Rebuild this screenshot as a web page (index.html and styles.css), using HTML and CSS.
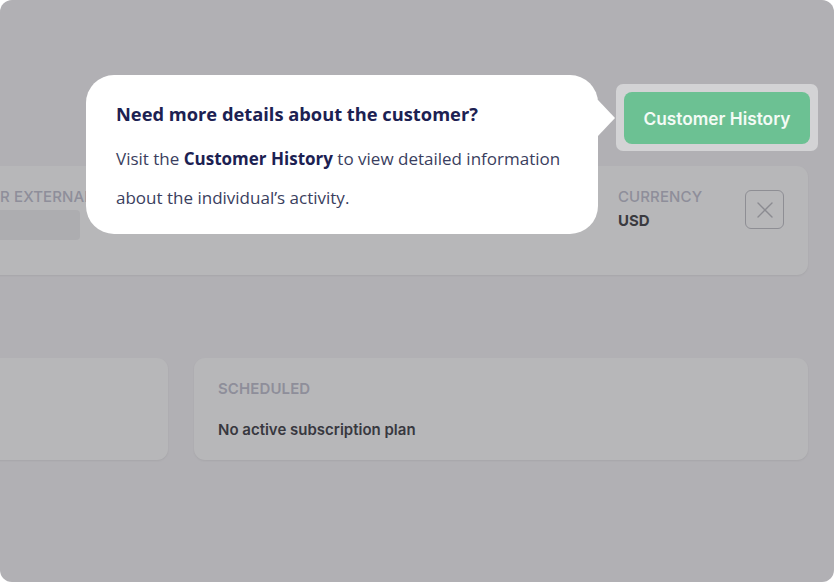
FILE: index.html
```html
<!DOCTYPE html>
<html>
<head>
<meta charset="utf-8">
<link rel="stylesheet" href="styles.css">
</head>
<body>
<div class="frame">
  <div class="content">
    <div class="header">
      <div class="spotlight">
        <button class="history-btn">Customer History</button>
      </div>
    </div>
    <div class="card info-card">
      <div class="field">
        <div class="label">Customer External ID</div>
        <div class="field-box"></div>
      </div>
      <div class="field currency">
        <div class="label">Currency</div>
        <div class="value">USD</div>
      </div>
      <div class="close-btn">
        <svg width="18" height="18" viewBox="0 0 18 18"><path d="M2 2L16 16M16 2L2 16" stroke="#8b8b91" stroke-width="1.4" stroke-linecap="round"/></svg>
      </div>
    </div>
    <div class="row">
      <div class="card left-card"></div>
      <div class="card sched-card">
        <div class="label">Scheduled</div>
        <div class="sched-value">No active subscription plan</div>
      </div>
    </div>
  </div>
  <div class="tooltip">
    <div class="tip-title">Need more details about the customer?</div>
    <p class="tip-body">Visit the <b>Customer History</b> to view detailed information about the individual’s activity.</p>
    <svg class="tip-arrow" width="26" height="44" viewBox="0 0 26 44"><path d="M0 2 L8 4 L25 22 L8 40 L0 42 Z" fill="#fff"/></svg>
  </div>
</div>
</body>
</html>
```
FILE: styles.css
```css
* { box-sizing: border-box; }
html, body { margin: 0; padding: 0; background: #ffffff; }
body { width: 834px; height: 582px; overflow: hidden; font-family: Inter, "Liberation Sans", sans-serif; }

.frame {
  position: relative;
  width: 834px;
  height: 582px;
  border-radius: 12px;
  overflow: hidden;
  background: #b1b0b4;
}

.content {
  margin-left: -260px;
  width: 1094px;
  padding-top: 92px;
  display: flex;
  flex-direction: column;
}

.header {
  display: flex;
  justify-content: flex-end;
  height: 52px;
  margin-right: 22px;
}

.spotlight {
  background: #d3d3d5;
  border-radius: 7px;
  padding: 8px;
  margin: -8px -6px -7px 0;
  display: flex;
}

.history-btn {
  border: none;
  background: #6cc193;
  color: #f4fbf6;
  font-family: Inter, "Liberation Sans", sans-serif;
  font-weight: 600;
  font-size: 17.3px;
  border-radius: 8px;
  width: 186px;
  height: 52px;
  padding: 0;
}

.card {
  background: #b7b7b9;
  border-radius: 11px;
  box-shadow: 0 1px 2px rgba(0,0,0,0.06);
}

.info-card {
  margin-top: 22px;
  margin-right: 26px;
  height: 109px;
  display: flex;
  align-items: flex-start;
  padding: 22px 24px 0 0;
}

.field { display: flex; flex-direction: column; }
.info-card .field:first-child { padding-left: 184px; width: 420px; }

.label {
  font-size: 15px;
  font-weight: 500;
  color: #8e8e9a;
  text-transform: uppercase;
  letter-spacing: 0.1px;
  line-height: 18px;
  white-space: nowrap;
}

.field-box {
  margin-top: 4px;
  height: 30px;
  width: 156px;
  background: #adadb0;
  border-radius: 4px;
}

.currency { margin-left: auto; width: 127px; }
.value {
  font-size: 15px;
  font-weight: 700;
  color: #3a3a40;
  margin-top: 5px;
}

.close-btn {
  width: 39px;
  height: 39px;
  margin-top: 2px;
  border: 1.5px solid #8e8e94;
  border-radius: 6px;
  display: flex;
  align-items: center;
  justify-content: center;
}

.row {
  display: flex;
  gap: 26px;
  margin-top: 83px;
  margin-right: 26px;
}

.left-card { width: 428px; height: 102px; }
.sched-card {
  flex: 1;
  height: 102px;
  padding: 22px 24px;
}
.sched-card .label { font-weight: 600; }
.sched-value {
  margin-top: 22px;
  font-size: 15px;
  font-weight: 600;
  color: #38383f;
}

.tooltip {
  position: absolute;
  left: 86px;
  top: 75px;
  width: 512px;
  height: 159px;
  background: #ffffff;
  border-radius: 28px;
  padding: 27px 30px 0 30px;
  font-family: "Open Sans", "Noto Sans", sans-serif;
}

.tip-title {
  font-size: 18.3px;
  font-weight: 700;
  color: #1c2152;
  line-height: 24px;
}

.tip-body {
  margin: 13px 0 0 0;
  font-size: 17px;
  line-height: 39px;
  color: #3a3e5e;
}
.tip-body b { color: #1c2152; font-weight: 700; }

.tip-arrow {
  position: absolute;
  left: 504px;
  top: 21px;
}
```
